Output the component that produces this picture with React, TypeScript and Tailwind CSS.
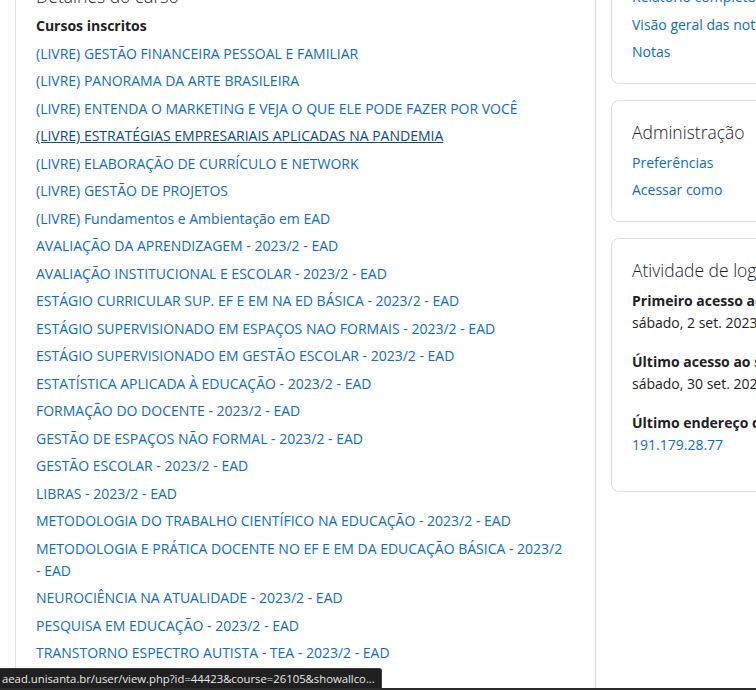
import React from 'react'

const FONT = { fontFamily: '"Open Sans", "Noto Sans", sans-serif' }

const courses = [
  '(LIVRE) GESTÃO FINANCEIRA PESSOAL E FAMILIAR',
  '(LIVRE) PANORAMA DA ARTE BRASILEIRA',
  '(LIVRE) ENTENDA O MARKETING E VEJA O QUE ELE PODE FAZER POR VOCÊ',
  '(LIVRE) ESTRATÉGIAS EMPRESARIAIS APLICADAS NA PANDEMIA',
  '(LIVRE) ELABORAÇÃO DE CURRÍCULO E NETWORK',
  '(LIVRE) GESTÃO DE PROJETOS',
  '(LIVRE) Fundamentos e Ambientação em EAD',
  'AVALIAÇÃO DA APRENDIZAGEM - 2023/2 - EAD',
  'AVALIAÇÃO INSTITUCIONAL E ESCOLAR - 2023/2 - EAD',
  'ESTÁGIO CURRICULAR SUP. EF E EM NA ED BÁSICA - 2023/2 - EAD',
  'ESTÁGIO SUPERVISIONADO EM ESPAÇOS NAO FORMAIS - 2023/2 - EAD',
  'ESTÁGIO SUPERVISIONADO EM GESTÃO ESCOLAR - 2023/2 - EAD',
  'ESTATÍSTICA APLICADA À EDUCAÇÃO - 2023/2 - EAD',
  'FORMAÇÃO DO DOCENTE - 2023/2 - EAD',
  'GESTÃO DE ESPAÇOS NÃO FORMAL - 2023/2 - EAD',
  'GESTÃO ESCOLAR - 2023/2 - EAD',
  'LIBRAS - 2023/2 - EAD',
  'METODOLOGIA DO TRABALHO CIENTÍFICO NA EDUCAÇÃO - 2023/2 - EAD',
  'METODOLOGIA E PRÁTICA DOCENTE NO EF E EM DA EDUCAÇÃO BÁSICA - 2023/2 - EAD',
  'NEUROCIÊNCIA NA ATUALIDADE - 2023/2 - EAD',
  'PESQUISA EM EDUCAÇÃO - 2023/2 - EAD',
  'TRANSTORNO ESPECTRO AUTISTA - TEA - 2023/2 - EAD',
]

const HOVERED = '(LIVRE) ESTRATÉGIAS EMPRESARIAIS APLICADAS NA PANDEMIA'
const SUFFIX = ' - EAD'

// keep "- EAD" together so a long name breaks before the dash
const CourseLabel = ({ name }: { name: string }) => {
  if (!name.endsWith(SUFFIX)) return <>{name}</>
  return (
    <>
      {name.slice(0, -SUFFIX.length)}{' '}
      <span className="whitespace-nowrap">- EAD</span>
    </>
  )
}

const Card = ({ children, className = '' }: { children: React.ReactNode, className?: string }) => (
  <section className={`rounded-lg border border-[#dee2e6] bg-white px-5 ${className}`}>
    {children}
  </section>
)

const CardTitle = ({ title }: { title: string }) => (
  <h5 className="text-[17.5px] font-light leading-[22.5px] text-[#1d2125] whitespace-nowrap">{title}</h5>
)

const LinkItem = ({ label }: { label: string }) => (
  <li className="mb-[5.5px] whitespace-nowrap">
    <a href="#" className="text-[#0f6cbf]">{label}</a>
  </li>
)

const InfoItem = ({ label, value, link }: { label: string, value: string, link?: boolean }) => (
  <div className="mb-[17px] whitespace-nowrap">
    <dt className="font-bold text-[#1d2125]">{label}</dt>
    <dd className={link ? 'text-[#0f6cbf]' : 'text-[#1d2125]'}>{value}</dd>
  </div>
)

export default function App() {
  return (
    <div className="flex h-[690px] w-[756px] flex-col overflow-hidden bg-white text-[14px] leading-[22px]" style={FONT}>
      <div className="relative flex-1 overflow-hidden">
        <div className="-mt-[40px] flex items-start gap-[15px] pl-[15px]">
          {/* Left - course details */}
          <Card className="w-[581px] shrink-0 pt-[24px] pb-10">
            <h3 className="text-[17.5px] font-light leading-[22.5px] text-[#1d2125]">Detalhes do curso</h3>
            <dl className="mt-[7px]">
              <dt className="font-bold text-[#1d2125]">Cursos inscritos</dt>
              <dd className="mt-[6px]">
                <ul>
                  {courses.map((course) => (
                    <li key={course} className="mb-[5.5px]">
                      <a
                        href="#"
                        className={course === HOVERED ? 'text-[#0a4b85] underline' : 'text-[#0f6cbf]'}
                      >
                        <CourseLabel name={course} />
                      </a>
                    </li>
                  ))}
                </ul>
              </dd>
            </dl>
          </Card>

          {/* Right - side blocks */}
          <div className="flex w-[320px] shrink-0 flex-col gap-[16px]">
            <Card className="pt-[25px] pb-[14.5px]">
              <ul>
                <LinkItem label="Relatório completo" />
                <LinkItem label="Visão geral das notas" />
                <LinkItem label="Notas" />
              </ul>
            </Card>

            <Card className="pt-[20px] pb-[14px]">
              <CardTitle title="Administração" />
              <ul className="mt-[8px]">
                <LinkItem label="Preferências" />
                <LinkItem label="Acessar como" />
              </ul>
            </Card>

            <Card className="pt-[20px] pb-[18px]">
              <CardTitle title="Atividade de login" />
              <dl className="mt-[9px]">
                <InfoItem label="Primeiro acesso ao site" value="sábado, 2 set. 2023, 10:15  (28 dias 2 horas)" />
                <InfoItem label="Último acesso ao site" value="sábado, 30 set. 2023, 12:40  (agora)" />
                <InfoItem label="Último endereço de IP" value="191.179.28.77" link />
              </dl>
            </Card>
          </div>
        </div>

        {/* Browser status bubble */}
        <div className="absolute bottom-0 left-0 h-[20px] rounded-tr-[3px] border-t border-r border-[#3c3c3c] bg-[#202020] pl-[2px] pr-[6px] text-[11.3px] leading-[19px] text-[#e8e8e8]">
          aead.unisanta.br/user/view.php?id=44423&amp;course=26105&amp;showallco...
        </div>
      </div>
      <div className="h-[2px] bg-[#2b2b2b]" />
    </div>
  )
}
